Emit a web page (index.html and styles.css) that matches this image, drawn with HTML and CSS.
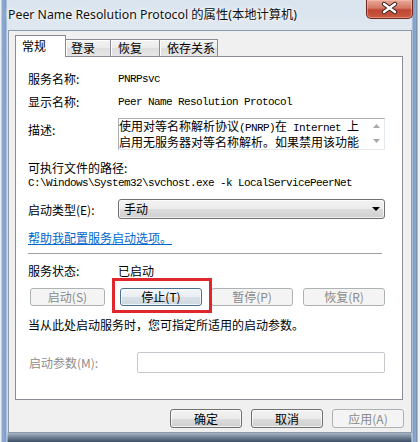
FILE: index.html
```html
<!DOCTYPE html>
<html>
<head>
<meta charset="utf-8">
<link rel="stylesheet" href="styles.css">
</head>
<body>
<div class="window">
  <div class="titlebar">
    <span class="title">Peer Name Resolution Protocol 的属性(本地计算机)</span>
    <div class="close">
      <svg width="45" height="17" viewBox="0 0 45 17">
        <path d="M17 4 L28 12 M28 4 L17 12" stroke="#3a2320" stroke-width="4.4" stroke-linecap="round" fill="none"/>
        <path d="M17 4 L28 12 M28 4 L17 12" stroke="#ffffff" stroke-width="2.4" stroke-linecap="round" fill="none"/>
      </svg>
    </div>
  </div>
  <div class="client">
    <div class="tabs">
      <div class="tab active t1">常规</div>
      <div class="tab t2">登录</div>
      <div class="tab t3">恢复</div>
      <div class="tab t4">依存关系</div>
    </div>
    <div class="panel">
      <div class="row"><span class="lbl">服务名称:</span><span class="mono">PNRPsvc</span></div>
      <div class="row"><span class="lbl">显示名称:</span><span class="mono">Peer Name Resolution Protocol</span></div>
      <div class="desc-row">
        <span class="lbl desc-lbl">描述:</span>
        <div class="descbox">
          <div class="desc-text">使用对等名称解析协议<span class="mono">(PNRP)</span>在<span class="mono"> Internet </span>上<br>启用无服务器对等名称解析。如果禁用该功能</div>
          <div class="vscroll">
            <svg width="7" height="4" viewBox="0 0 7 4"><path d="M0 4 L3.5 0 L7 4 Z" fill="#a9a9a9"/></svg>
            <svg width="7" height="4" viewBox="0 0 7 4"><path d="M0 0 L3.5 4 L7 0 Z" fill="#a9a9a9"/></svg>
          </div>
        </div>
      </div>
      <div class="path-lbl">可执行文件的路径:</div>
      <div class="path mono">C:\Windows\System32\svchost.exe -k LocalServicePeerNet</div>
      <div class="type-row">
        <span class="lbl">启动类型(E):</span>
        <div class="select">
          <span>手动</span>
          <svg width="8" height="4" viewBox="0 0 8 4"><path d="M0 0 L8 0 L4 4 Z" fill="#000"/></svg>
        </div>
      </div>
      <div class="link">帮助我配置服务启动选项。</div>
      <div class="sep"></div>
      <div class="status-row"><span class="lbl">服务状态:</span><span>已启动</span></div>
      <div class="btn-row">
        <div class="btn disabled b-start">启动(S)</div>
        <div class="btn focus b-stop">停止(T)</div>
        <div class="btn disabled b-pause">暂停(P)</div>
        <div class="btn disabled b-resume">恢复(R)</div>
      </div>
      <div class="hint">当从此处启动服务时，您可指定所适用的启动参数。</div>
      <div class="param-row">
        <span class="plbl">启动参数(M):</span>
        <div class="pinput"></div>
      </div>
    </div>
    <div class="footer">
      <div class="btn fbtn">确定</div>
      <div class="btn fbtn">取消</div>
      <div class="btn fbtn disabled">应用(A)</div>
    </div>
  </div>
  <div class="redbox"></div>
</div>
</body>
</html>
```

FILE: styles.css
```css
html, body {
  margin: 0;
  padding: 0;
}
body {
  width: 420px;
  height: 442px;
  overflow: hidden;
  font-family: "Noto Sans CJK SC", sans-serif;
  font-size: 12px;
  color: #000;
}
.window {
  position: relative;
  height: 442px;
  box-sizing: border-box;
  padding: 0 8px 9px 8px;
  display: flex;
  flex-direction: column;
  background:
    linear-gradient(to right, #e9eef4 0 1px, #8eaad0 2px, #7f9ecb 6px, #d7e1ec 7px, transparent 8px),
    linear-gradient(to left, #f2f4f6 0 2px, #6b7c90 3px, #8fa9cc 4px, #7d9dc9 7px, #d6e0ea 8px, transparent 9px),
    linear-gradient(180deg, #d9e4ef 0, #dfe7ef 28px, #cbd8e6 60px, #c3d3e5 300px, #cbd7e4 430px, #3a4c63 442px);
}
.titlebar {
  height: 30px;
  flex: none;
  display: flex;
  justify-content: space-between;
  align-items: flex-start;
}
.title {
  margin-top: 7px;
  line-height: 16px;
  font-family: "Noto Sans", "Noto Sans CJK SC", sans-serif;
  font-size: 12.3px;
  color: #111;
  text-shadow: 0 0 6px rgba(255,255,255,0.95), 0 0 3px rgba(255,255,255,0.9);
  white-space: nowrap;
}
.close {
  width: 47px;
  height: 19px;
  box-sizing: border-box;
  margin-right: -1px;
  border: 1px solid #6d2a22;
  border-top: none;
  border-radius: 0 0 5px 5px;
  background: linear-gradient(180deg, #e9a898 0%, #d47764 45%, #c04633 55%, #c85a3f 100%);
  box-shadow: inset 0 0 0 1px rgba(255,200,190,0.45);
}
.close svg {
  display: block;
}
.client {
  flex: 1;
  background: #f0f0f0;
  border: 1px solid #8c9aab;
  padding: 4px 8px 0 6px;
  display: flex;
  flex-direction: column;
}
.tabs {
  display: flex;
  align-items: flex-end;
  height: 21px;
}
.tab {
  box-sizing: border-box;
  border: 1px solid #898c95;
  border-bottom: none;
  height: 17px;
  line-height: 16px;
  padding-left: 6px;
  margin-left: -1px;
  background: linear-gradient(180deg, #f3f3f3 0%, #ebebeb 50%, #dedede 50%, #e6e6e6 100%);
  box-shadow: inset 1px 1px 0 #fff;
  white-space: nowrap;
}
.tab.active {
  height: 22px;
  margin-bottom: -1px;
  padding-top: 0;
  line-height: 20px;
  background: #fff;
  box-shadow: none;
  position: relative;
  z-index: 1;
}
.t1 { width: 51px; margin-left: 0; }
.t2 { width: 46px; padding-left: 5px; }
.t3 { width: 50px; padding-left: 7px; }
.t4 { width: 59px; padding-left: 7px; }
.panel {
  height: 344px;
  box-sizing: border-box;
  background: #fff;
  border: 1px solid #898c95;
  padding: 10px 17px 0 12px;
}
.row {
  display: flex;
  align-items: center;
  height: 23px;
}
.lbl {
  width: 90px;
  flex: none;
  white-space: nowrap;
}
.mono {
  font-family: "Liberation Mono", monospace;
  font-size: 11px;
  letter-spacing: -0.6px;
}
.desc-row {
  display: flex;
  margin-top: 5px;
}
.desc-lbl {
  padding-top: 4px;
  line-height: 16px;
}
.descbox {
  width: 268px;
  height: 32px;
  box-sizing: border-box;
  border: 1px solid;
  border-color: #abadb3 #e3e9ef #e3e9ef #abadb3;
  display: flex;
  justify-content: space-between;
}
.desc-text {
  line-height: 14px;
  padding-top: 0;
  white-space: nowrap;
}
.vscroll {
  width: 15px;
  display: flex;
  flex-direction: column;
  align-items: center;
  justify-content: space-between;
  padding: 5px 0 6px;
  box-sizing: border-box;
}
.vscroll svg {
  display: block;
}
.path-lbl {
  margin-top: 10px;
  line-height: 16px;
}
.path {
  line-height: 14px;
  white-space: nowrap;
}
.type-row {
  margin-top: 9px;
  display: flex;
  align-items: center;
  height: 20px;
}
.select {
  width: 267px;
  height: 20px;
  box-sizing: border-box;
  border: 1px solid #707070;
  border-radius: 3px;
  background: linear-gradient(180deg, #f2f2f2 0%, #ebebeb 50%, #dddddd 50%, #cfcfcf 100%);
  box-shadow: inset 0 0 0 1px rgba(255,255,255,0.7);
  display: flex;
  align-items: center;
  justify-content: space-between;
  padding: 0 4px 0 5px;
  line-height: 16px;
}
.select svg {
  display: block;
}
.link {
  margin-top: 11px;
  line-height: 16px;
  color: #0066cc;
  text-decoration: underline;
}
.sep {
  margin-top: 7px;
  margin-right: 3px;
  height: 1px;
  background: #a0a0a0;
}
.status-row {
  margin-top: 9px;
  display: flex;
  line-height: 16px;
}
.btn-row {
  margin-top: 9px;
  display: flex;
  height: 18px;
}
.btn {
  height: 18px;
  box-sizing: border-box;
  border: 1px solid #707070;
  border-radius: 3px;
  background: linear-gradient(180deg, #f2f2f2 0%, #ebebeb 50%, #dddddd 50%, #cfcfcf 100%);
  box-shadow: inset 0 0 0 1px rgba(255,255,255,0.7);
  text-align: center;
  line-height: 16px;
  white-space: nowrap;
}
.btn.disabled {
  border-color: #adb2b5;
  background: #f4f4f4;
  box-shadow: none;
  color: #8a8a8a;
}
.btn.focus {
  border-color: #4a6f8e;
  background: linear-gradient(180deg, #f3f6f8 0%, #e9eef2 50%, #d9e1e7 50%, #cfd8df 100%);
}
.b-start { width: 75px; margin-left: 2px; }
.b-stop { width: 82px; margin-left: 15px; }
.b-pause { width: 82px; margin-left: 9px; }
.b-resume { width: 82px; margin-left: 10px; }
.hint {
  margin-top: 11px;
  line-height: 16px;
  white-space: nowrap;
}
.param-row {
  margin-top: 19px;
  display: flex;
  align-items: center;
  height: 21px;
}
.plbl {
  width: 109px;
  flex: none;
  color: #8d8d8d;
  padding-left: 1px;
  box-sizing: border-box;
}
.pinput {
  width: 249px;
  height: 21px;
  box-sizing: border-box;
  border: 1px solid #c5c8cc;
  border-radius: 2px;
  background: #fff;
}
.footer {
  margin-top: 9px;
  display: flex;
  justify-content: flex-end;
  gap: 9px;
  margin-right: -1px;
}
.fbtn {
  width: 72px;
  height: 19px;
  line-height: 17px;
}
.redbox {
  position: absolute;
  left: 112px;
  top: 278px;
  width: 100px;
  height: 35px;
  box-sizing: border-box;
  border: 3px solid #e0282c;
}
```
